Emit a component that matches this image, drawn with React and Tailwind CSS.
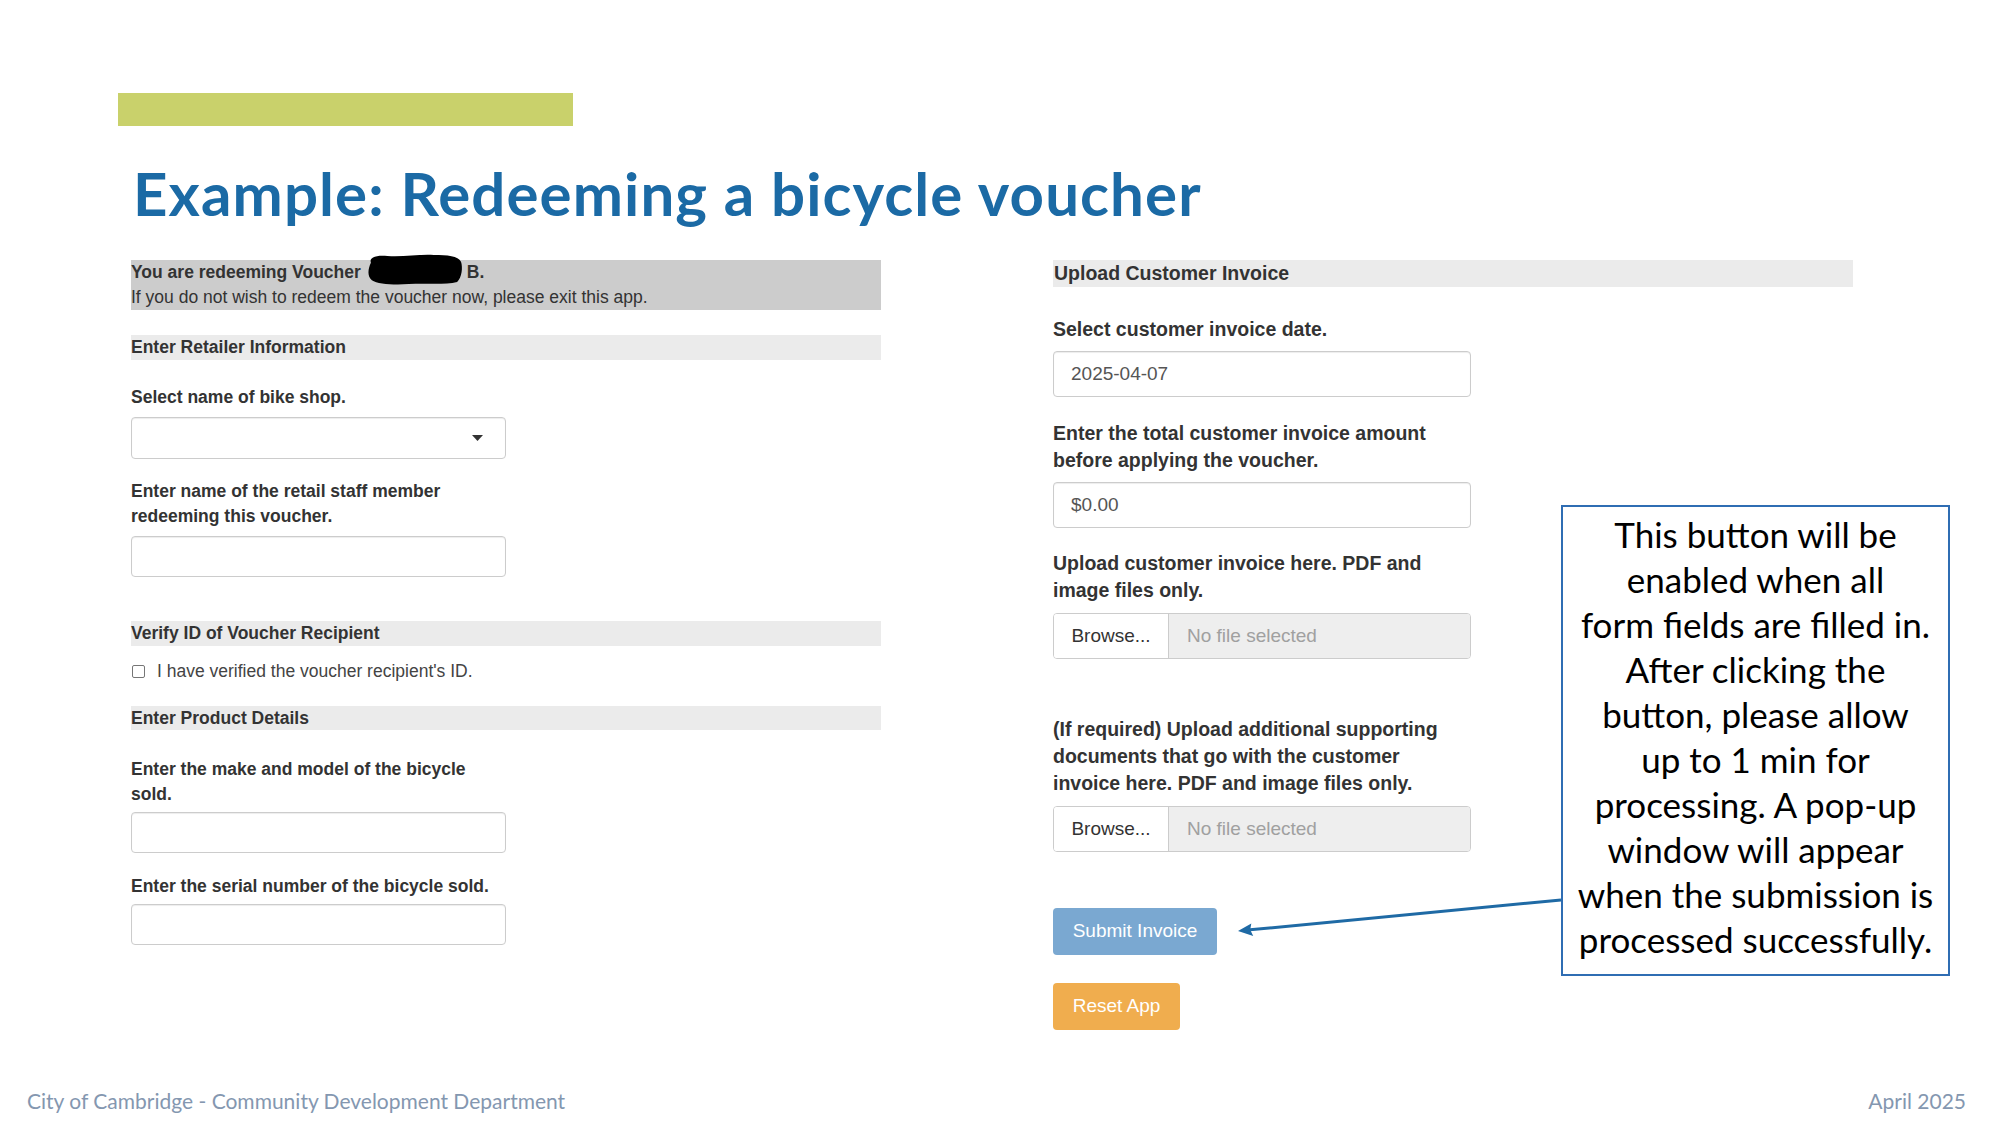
import React from "react";

const leftLabel = "text-[17.5px] leading-[25px] font-bold text-[#333] whitespace-nowrap";
const rightLabel = "text-[19.5px] leading-[27px] font-bold text-[#333] whitespace-nowrap";
const leftInput = "w-[375px] h-[41px] bg-white border border-[#cccccc] rounded-[4px] shadow-[inset_0_1px_1px_rgba(0,0,0,0.075)]";
const rightInput = "w-[418px] h-[46px] bg-white border border-[#cccccc] rounded-[4px] shadow-[inset_0_1px_1px_rgba(0,0,0,0.075)] flex items-center pl-[17px] text-[19px] text-[#555]";

function FileInput({ className }) {
  return (
    <div className={"w-[418px] h-[46px] flex border border-[#cccccc] rounded-[4px] overflow-hidden " + className}>
      <div className="w-[115px] h-full bg-white border-r border-[#cccccc] flex items-center justify-center text-[19px] text-[#333]">
        Browse...
      </div>
      <div className="flex-1 h-full bg-[#eeeeee] flex items-center pl-[18px] text-[19px] text-[#a0a0a0]">
        No file selected
      </div>
    </div>
  );
}

export default function App() {
  return (
    <div className="relative w-[2000px] h-[1125px] bg-white overflow-hidden flex flex-col font-['Liberation_Sans',Arial,sans-serif]">
      {/* green accent bar */}
      <div className="ml-[118px] mt-[93px] w-[455px] h-[33px] bg-[#c9d16b]" />

      {/* title */}
      <div className="ml-[133px] mt-[37px] h-[60px] text-[60px] leading-[60px] tracking-[1.1px] font-bold text-[#1b6aa5] font-['Lato',sans-serif] whitespace-nowrap">
        Example: Redeeming a bicycle voucher
      </div>

      {/* content */}
      <div className="mt-[37px] flex">
        {/* left column */}
        <div className="ml-[131px] w-[750px] flex flex-col">
          <div className="h-[50px] bg-[#cccccc] text-[#333] text-[17.5px] leading-[25px]">
            <div className="flex items-center whitespace-nowrap">
              <span className="font-bold">You are redeeming Voucher</span>
              <span className="relative ml-[4px] w-[99px] h-[25px]">
                <svg className="absolute left-0 top-[-6px]" width="99" height="31" viewBox="0 0 100 32">
                  <path
                    d="M5,9 C3,3 11,1 22,2 C40,3 55,0 70,1 C84,1 95,2 98,8 C100,14 99,24 94,29 C82,32 62,30 44,31 C28,32 12,31 6,27 C1,23 2,15 5,9 Z"
                    fill="#000"
                  />
                </svg>
              </span>
              <span className="font-bold ml-[3px]">B.</span>
            </div>
            <div className="whitespace-nowrap">If you do not wish to redeem the voucher now, please exit this app.</div>
          </div>

          <div className="mt-[25px] h-[25px] bg-[#ebebeb] text-[17.5px] leading-[25px] font-bold text-[#333]">
            Enter Retailer Information
          </div>

          <div className={"mt-[25px] " + leftLabel}>Select name of bike shop.</div>
          <div className={"mt-[7px] relative " + leftInput + " h-[42px]"}>
            <svg className="absolute left-[340px] top-[17px]" width="11" height="6" viewBox="0 0 11 6">
              <polygon points="0,0 11,0 5.5,6" fill="#333" />
            </svg>
          </div>

          <div className={"mt-[20px] " + leftLabel}>
            Enter name of the retail staff member
            <br />
            redeeming this voucher.
          </div>
          <div className={"mt-[7px] " + leftInput} />

          <div className="mt-[44px] h-[25px] bg-[#ebebeb] text-[17.5px] leading-[25px] font-bold text-[#333]">
            Verify ID of Voucher Recipient
          </div>

          <div className="mt-[13px] flex items-center h-[25px] text-[17.5px] text-[#444] whitespace-nowrap">
            <span className="ml-[1px] w-[13px] h-[13px] border border-[#767676] rounded-[2px] bg-white" />
            <span className="ml-[12px]">I have verified the voucher recipient's ID.</span>
          </div>

          <div className="mt-[22px] h-[24px] bg-[#ebebeb] text-[17.5px] leading-[24px] font-bold text-[#333]">
            Enter Product Details
          </div>

          <div className={"mt-[27px] " + leftLabel}>
            Enter the make and model of the bicycle
            <br />
            sold.
          </div>
          <div className={"mt-[5px] " + leftInput} />

          <div className={"mt-[21px] " + leftLabel}>Enter the serial number of the bicycle sold.</div>
          <div className={"mt-[5px] " + leftInput} />
        </div>

        {/* right column */}
        <div className="ml-[172px] w-[800px] flex flex-col">
          <div className="h-[27px] bg-[#ebebeb] text-[19.5px] leading-[27px] font-bold text-[#333] pl-[1px]">
            Upload Customer Invoice
          </div>

          <div className={"mt-[29px] " + rightLabel}>Select customer invoice date.</div>
          <div className={"mt-[8px] " + rightInput}>2025-04-07</div>

          <div className={"mt-[23px] " + rightLabel}>
            Enter the total customer invoice amount
            <br />
            before applying the voucher.
          </div>
          <div className={"mt-[8px] " + rightInput}>$0.00</div>

          <div className={"mt-[22px] " + rightLabel}>
            Upload customer invoice here. PDF and
            <br />
            image files only.
          </div>
          <FileInput className="mt-[9px]" />

          <div className={"mt-[57px] " + rightLabel}>
            (If required) Upload additional supporting
            <br />
            documents that go with the customer
            <br />
            invoice here. PDF and image files only.
          </div>
          <FileInput className="mt-[9px]" />

          <div className="mt-[56px] w-[164px] h-[47px] rounded-[4px] bg-[#7aa8d1] text-white text-[19px] flex items-center justify-center">
            Submit Invoice
          </div>
          <div className="mt-[28px] w-[127px] h-[47px] rounded-[4px] bg-[#f0ad4e] text-white text-[19px] flex items-center justify-center">
            Reset App
          </div>
        </div>
      </div>

      {/* footer */}
      <div className="mt-auto pb-[14px] pl-[27px] pr-[34px] flex justify-between text-[21px] leading-[21px] text-[#8497b0] font-['Lato',sans-serif]">
        <span>City of Cambridge - Community Development Department</span>
        <span>April 2025</span>
      </div>

      {/* annotation arrow */}
      <svg className="absolute left-[1230px] top-[890px]" width="340" height="50" viewBox="0 0 340 50">
        <line x1="331" y1="10" x2="20" y2="39.8" stroke="#1f6aa5" strokeWidth="3" />
        <polygon points="8,41 23.2,46 20.2,39.7 21.3,33.4" fill="#1f6aa5" />
      </svg>

      {/* annotation callout */}
      <div className="absolute left-[1561px] top-[505px] w-[389px] h-[471px] border-2 border-[#2f6db3] bg-white pb-[8px] flex flex-col items-center justify-center text-center text-[35px] leading-[45px] text-black font-['Lato',sans-serif]">
        <div>This button will be</div>
        <div>enabled when all</div>
        <div>form fields are filled in.</div>
        <div>After clicking the</div>
        <div>button, please allow</div>
        <div>up to 1 min for</div>
        <div>processing. A pop-up</div>
        <div>window will appear</div>
        <div>when the submission is</div>
        <div>processed successfully.</div>
      </div>
    </div>
  );
}
